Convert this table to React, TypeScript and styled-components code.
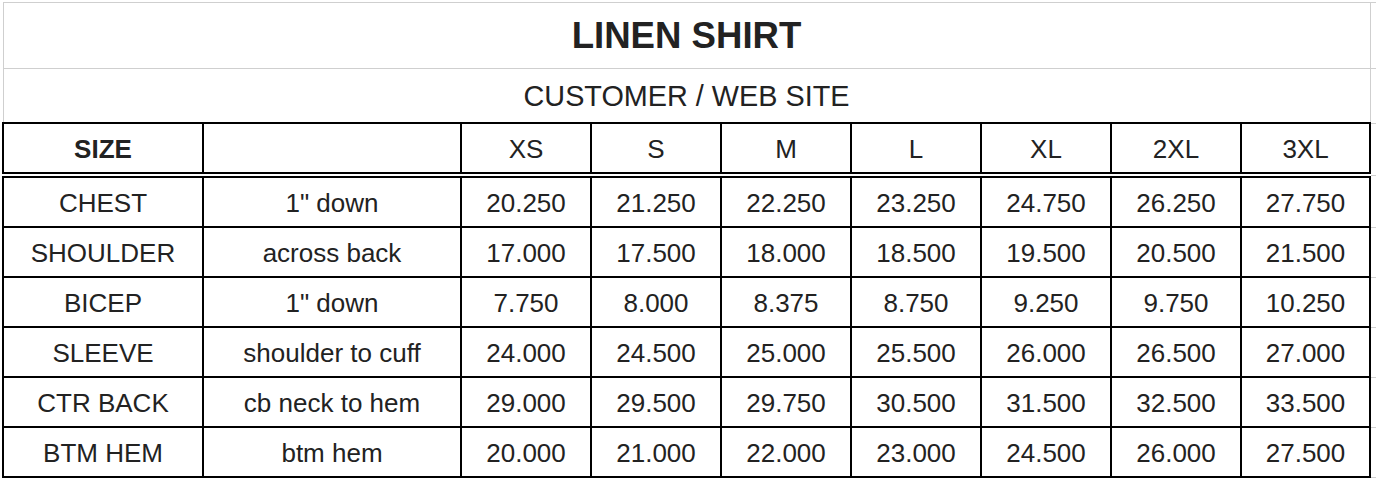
import React from 'react';
import styled, { createGlobalStyle } from 'styled-components';

const GlobalStyle = createGlobalStyle`
  html, body {
    margin: 0;
    padding: 0;
    background: #fff;
    overflow: hidden;
  }
  body {
    font-family: 'Liberation Sans', Arial, sans-serif;
    color: #222;
  }
`;

const Sheet = styled.div`
  padding: 2px 0 0 2px;
  width: 1400px;
`;

const Table = styled.table`
  border-collapse: collapse;
  table-layout: fixed;
  width: 1278px;
`;

const TitleCell = styled.td<{ $sub?: boolean }>`
  height: ${p => (p.$sub ? 51 : 63)}px;
  padding: 2px 0 0;
  border: 1px solid #cfcfcf;
  text-align: center;
  vertical-align: middle;
  font-size: ${p => (p.$sub ? 28.8 : 36.6)}px;
  font-weight: ${p => (p.$sub ? 'normal' : 'bold')};
  line-height: 1;
`;

const Cell = styled.td<{ $bold?: boolean; $head?: boolean }>`
  height: 46px;
  padding: 2px 0 0;
  border: 2px solid #000;
  border-bottom: ${p => (p.$head ? '6px double #000' : '2px solid #000')};
  text-align: center;
  vertical-align: middle;
  font-size: 26px;
  font-weight: ${p => (p.$bold ? 'bold' : 'normal')};
  line-height: 1;
  white-space: nowrap;
`;

const Spill = styled.td`
  padding: 0;
  border-top: 1px solid #cfcfcf;
  border-bottom: 1px solid #cfcfcf;
  border-right: 1px solid #cfcfcf;
`;

const widths = [200, 258, 130, 130, 130, 130, 130, 130, 129, 40];

const sizes = ['XS', 'S', 'M', 'L', 'XL', '2XL', '3XL'];

const rows = [
  ['CHEST', '1" down', '20.250', '21.250', '22.250', '23.250', '24.750', '26.250', '27.750'],
  ['SHOULDER', 'across back', '17.000', '17.500', '18.000', '18.500', '19.500', '20.500', '21.500'],
  ['BICEP', '1" down', '7.750', '8.000', '8.375', '8.750', '9.250', '9.750', '10.250'],
  ['SLEEVE', 'shoulder to cuff', '24.000', '24.500', '25.000', '25.500', '26.000', '26.500', '27.000'],
  ['CTR BACK', 'cb neck to hem', '29.000', '29.500', '29.750', '30.500', '31.500', '32.500', '33.500'],
  ['BTM HEM', 'btm hem', '20.000', '21.000', '22.000', '23.000', '24.500', '26.000', '27.500'],
];

const App = () => (
  <Sheet>
    <GlobalStyle />
    <Table>
      <colgroup>
        {widths.map((w, i) => (
          <col key={i} style={{ width: w }} />
        ))}
      </colgroup>
      <tbody>
        <tr>
          <TitleCell colSpan={9}>LINEN SHIRT</TitleCell>
          <Spill />
        </tr>
        <tr>
          <TitleCell $sub colSpan={9}>CUSTOMER / WEB SITE</TitleCell>
          <Spill />
        </tr>
        <tr>
          <Cell $head $bold>SIZE</Cell>
          <Cell $head />
          {sizes.map(s => (
            <Cell $head key={s}>{s}</Cell>
          ))}
          <Spill />
        </tr>
        {rows.map(r => (
          <tr key={r[0]}>
            {r.map((v, i) => (
              <Cell key={i}>{v}</Cell>
            ))}
            <Spill />
          </tr>
        ))}
      </tbody>
    </Table>
  </Sheet>
);

export default App;
